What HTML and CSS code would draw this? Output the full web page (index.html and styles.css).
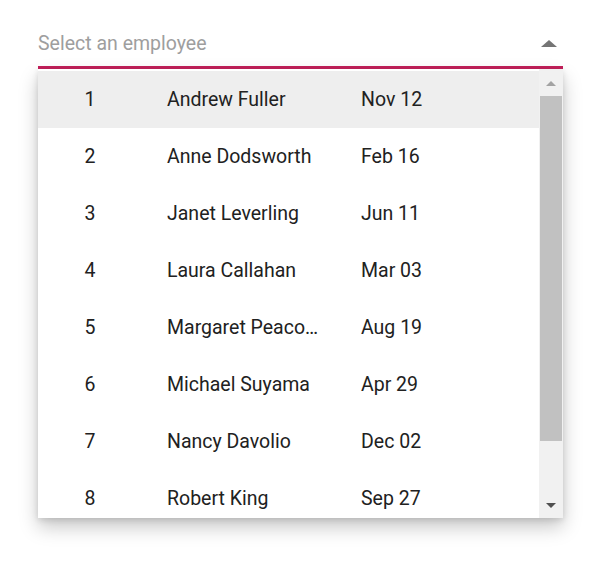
FILE: index.html
```html
<!DOCTYPE html>
<html lang="en">
<head>
  <meta charset="UTF-8">
  <meta name="viewport" content="width=device-width, initial-scale=1.0">
  <title>Employee ComboBox</title>
  <link rel="stylesheet" href="styles.css">
</head>
<body>
  <div class="Combo">
    <div class="Combo_Input">
      <span class="Combo_Placeholder">Select an employee</span>
      <span class="Combo_Caret"></span>
    </div>

    <div class="Popup" role="listbox">
      <div class="Popup_List">
        <div class="Row -active"><span class="Row_Id">1</span><span class="Row_Name">Andrew Fuller</span><span class="Row_Date">Nov 12</span></div>
        <div class="Row"><span class="Row_Id">2</span><span class="Row_Name">Anne Dodsworth</span><span class="Row_Date">Feb 16</span></div>
        <div class="Row"><span class="Row_Id">3</span><span class="Row_Name">Janet Leverling</span><span class="Row_Date">Jun 11</span></div>
        <div class="Row"><span class="Row_Id">4</span><span class="Row_Name">Laura Callahan</span><span class="Row_Date">Mar 03</span></div>
        <div class="Row"><span class="Row_Id">5</span><span class="Row_Name">Margaret Peacock</span><span class="Row_Date">Aug 19</span></div>
        <div class="Row"><span class="Row_Id">6</span><span class="Row_Name">Michael Suyama</span><span class="Row_Date">Apr 29</span></div>
        <div class="Row"><span class="Row_Id">7</span><span class="Row_Name">Nancy Davolio</span><span class="Row_Date">Dec 02</span></div>
        <div class="Row"><span class="Row_Id">8</span><span class="Row_Name">Robert King</span><span class="Row_Date">Sep 27</span></div>
      </div>

      <div class="Scrollbar">
        <span class="Scrollbar_Arrow -up"></span>
        <span class="Scrollbar_Thumb"></span>
        <span class="Scrollbar_Arrow -down"></span>
      </div>
    </div>
  </div>
</body>
</html>
```

FILE: styles.css
```css
html {
  height: 100%;
}
body {
  margin: 0;
  min-height: 100%;
  background: #fff;
  font-family: Roboto, "Liberation Sans", sans-serif;
  color: #212121;
}

.Combo {
  width: 525px;
  margin: 0 0 0 38px;
  padding: 29px 0 40px;
}

/* 入力欄 */
.Combo_Input {
  display: flex;
  align-items: center;
  justify-content: space-between;
  height: 37px;
  border-bottom: 3px solid #c4205b;
}
.Combo_Placeholder {
  font-size: 19.5px;
  color: #9e9e9e;
  margin-top: -8px;
}
.Combo_Caret {
  width: 0;
  height: 0;
  margin-right: 6px;
  margin-top: -8px;
  border-style: solid;
  border-width: 0 8px 7px 8px;
  border-color: transparent transparent #757575 transparent;
}

/* ポップアップ */
.Popup {
  display: flex;
  height: 449px;
  background: #fff;
  box-shadow: 0 9px 18px rgba(0, 0, 0, 0.22), 0 2px 6px rgba(0, 0, 0, 0.12);
  overflow: hidden;
}
.Popup_List {
  flex: 1;
  padding-top: 2px;
}

.Row {
  display: grid;
  grid-template-columns: 104px 194px 1fr;
  align-items: center;
  height: 57px;
  font-size: 19.5px;
  color: #212121;
}
.Row.-active {
  background: #eeeeee;
}
.Row_Id {
  text-align: center;
}
.Row_Name {
  padding: 0 16px 0 25px;
  white-space: nowrap;
  overflow: hidden;
  text-overflow: ellipsis;
}
.Row_Date {
  padding-left: 25px;
}

/* スクロールバー */
.Scrollbar {
  display: flex;
  flex-direction: column;
  align-items: center;
  width: 24px;
  background: #f1f1f1;
}
.Scrollbar_Arrow {
  width: 0;
  height: 0;
  border-style: solid;
}
.Scrollbar_Arrow.-up {
  margin: 12px 0 10px;
  border-width: 0 5px 5px 5px;
  border-color: transparent transparent #a3a3a3 transparent;
}
.Scrollbar_Arrow.-down {
  margin: auto 0 10px;
  border-width: 5px 5px 0 5px;
  border-color: #505050 transparent transparent transparent;
}
.Scrollbar_Thumb {
  width: 22px;
  height: 345px;
  background: #c1c1c1;
}
```
